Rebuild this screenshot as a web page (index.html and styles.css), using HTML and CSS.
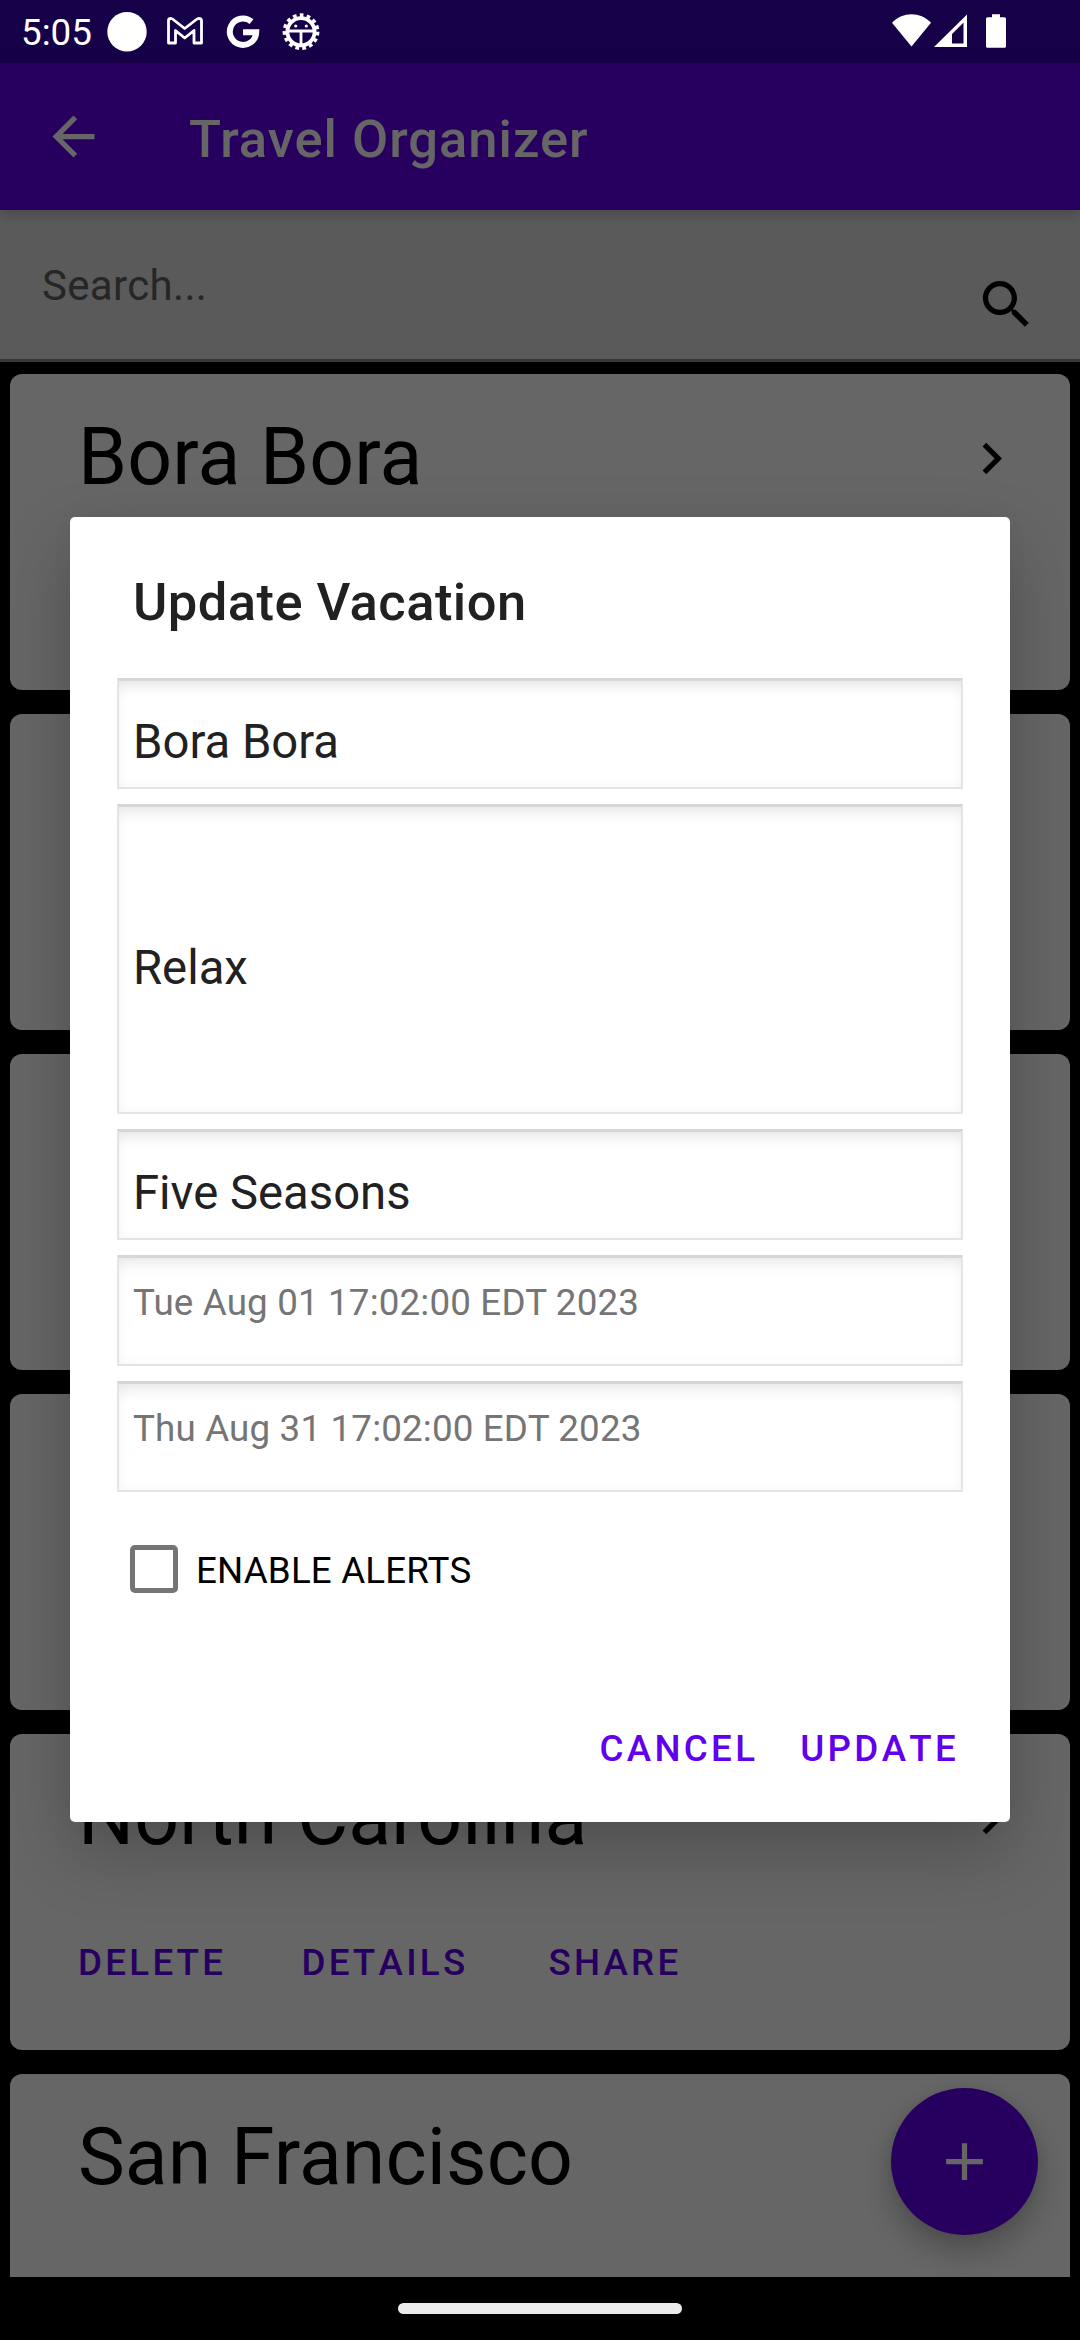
FILE: index.html
```html
<!DOCTYPE html>
<html lang="en">
<head>
<meta charset="utf-8">
<title>Travel Organizer</title>
<link rel="stylesheet" href="styles.css">
</head>
<body>
<div class="screen">
  <div class="app">
    <div class="status-space"></div>
    <header class="app-bar">
      <svg class="icon" viewBox="0 0 24 24"><path d="M20 11H7.83l5.59-5.59L12 4l-8 8 8 8 1.41-1.41L7.83 13H20v-2z"/></svg>
      <h1 class="app-title">Travel Organizer</h1>
    </header>
    <div class="search">
      <span class="search-hint">Search...</span>
      <svg class="icon search-icon" viewBox="0 0 24 24"><path d="M15.5 14h-.79l-.28-.27C15.41 12.59 16 11.11 16 9.5 16 5.91 13.09 3 9.5 3S3 5.91 3 9.5 5.91 16 9.5 16c1.61 0 3.09-.59 4.23-1.57l.27.28v.79l5 4.99L20.49 19l-4.99-5zm-6 0C7.01 14 5 11.99 5 9.5S7.01 5 9.5 5 14 7.01 14 9.5 11.99 14 9.5 14z"/></svg>
    </div>
    <main class="list">
      <article class="card">
        <div class="card-head"><h2 class="card-title">Bora Bora</h2><svg class="icon" viewBox="0 0 24 24"><path d="M10 6L8.59 7.41 13.17 12l-4.58 4.59L10 18l6-6z"/></svg></div>
      </article>
      <article class="card"></article>
      <article class="card"></article>
      <article class="card"></article>
      <article class="card">
        <div class="card-head"><h2 class="card-title">North Carolina</h2><svg class="icon" viewBox="0 0 24 24"><path d="M10 6L8.59 7.41 13.17 12l-4.58 4.59L10 18l6-6z"/></svg></div>
        <div class="card-actions"><span>DELETE</span><span>DETAILS</span><span>SHARE</span></div>
      </article>
      <article class="card">
        <div class="card-head"><h2 class="card-title">San Francisco</h2></div>
      </article>
    </main>
    <div class="fab"><svg class="icon" viewBox="0 0 24 24"><path d="M19 13h-6v6h-2v-6H5v-2h6V5h2v6h6v2z"/></svg></div>
  </div>

  <div class="scrim">
    <section class="dialog">
      <h2 class="dialog-title">Update Vacation</h2>
      <div class="fields">
        <div class="field">Bora Bora</div>
        <div class="field field-tall">Relax</div>
        <div class="field">Five Seasons</div>
        <div class="field field-date">Tue Aug 01 17:02:00 EDT 2023</div>
        <div class="field field-date">Thu Aug 31 17:02:00 EDT 2023</div>
      </div>
      <div class="alerts"><span class="checkbox"></span><span class="alerts-label">ENABLE ALERTS</span></div>
      <div class="dialog-actions"><span>CANCEL</span><span>UPDATE</span></div>
    </section>
  </div>

  <div class="status-bar">
    <span class="clock">5:05</span>
    <svg class="status-left" viewBox="0 0 220 63" width="220" height="63">
      <circle cx="27" cy="31.7" r="19.7" fill="#fff"/>
      <path d="M68.5 20.5Q68.5 18.5 71 18.5L72.5 19L84.7 28.500L97 19L98.500 18.500Q101.500 18.500 101.500 20.500V43H94V30.500L84.700 38L75.500 30.500V43H68.500Z" fill="none" stroke="#fff" stroke-width="2.8" stroke-linejoin="round"/>
      <path d="M151.500 21.600A13.200 13.200 0 1 0 156.200 32.300H143" fill="none" stroke="#fff" stroke-width="6"/>
      <g fill="none" stroke="#fff">
        <circle cx="201" cy="31.7" r="13.6" stroke-width="3.8"/>
        <circle cx="201" cy="31.7" r="16.5" stroke-width="3.8" stroke-dasharray="3.7 3.212"/>
        <path d="M188 31H214M201 31V46" stroke-width="2.8"/>
      </g>
      <circle cx="195.7" cy="26" r="1.6" fill="#fff"/><circle cx="206.3" cy="26" r="1.6" fill="#fff"/>
    </svg>
    <svg class="status-right" viewBox="0 0 116 63" width="116" height="63">
      <path d="M0 22.700C11 11.500 28 11.500 39 22.700L19.500 46.500Z" fill="#fff"/>
      <path d="M42 47L75 14.500V47ZM60 43.500H71.500V22.500L60 34Z" fill="#fff" fill-rule="evenodd"/>
      <path d="M100 14.300h8v3h4.500q1.500 0 1.500 1.500v27.500q0 1.500-1.500 1.500h-17q-1.500 0-1.500-1.500v-27.500q0-1.500 1.500-1.500h4.500z" fill="#fff"/>
    </svg>
  </div>
  <div class="nav-bar"><div class="nav-pill"></div></div>
</div>
</body>
</html>
```
FILE: styles.css
```css
* { box-sizing: border-box; }
body { margin: 0; background: #000; font-family: Roboto, sans-serif; }
h1, h2 { margin: 0; font-weight: 400; }
.screen { position: relative; width: 1080px; height: 2340px; overflow: hidden; background: #000; }
.icon { width: 63px; height: 63px; flex: none; fill: currentColor; display: block; }

.app { position: relative; z-index: 0; height: 2277px; overflow: hidden; display: flex; flex-direction: column; }
.status-space { height: 63px; flex: none; background: #3700b3; }
.app-bar { position: relative; z-index: 1; height: 147px; flex: none; display: flex; align-items: center; gap: 84px; padding: 0 42px; background: #6200ee; color: #fff; box-shadow: 0 4px 12px rgba(0, 0, 0, .22); }
.app-title { font-size: 52.5px; font-weight: 500; line-height: 62px; padding-top: 4px; letter-spacing: 1px; }
.search { height: 152px; flex: none; display: flex; justify-content: space-between; padding: 0 42px; background: #e1e1e1; border-bottom: 3px solid #8c8c8c; }
.search-hint { font-size: 42px; line-height: 50px; padding-top: 51px; letter-spacing: .33px; color: #606060; }
.search-icon { margin-top: 63px; }
.list { display: flex; flex-direction: column; gap: 24px; padding: 12px 10px; }
.card { height: 316px; flex: none; border-radius: 12px; background: #fff; padding: 37px 47px 0 68px; color: #000; }
.card-head { display: flex; justify-content: space-between; align-items: flex-start; height: 150px; }
.card-title { font-size: 78.75px; line-height: 92px; letter-spacing: .1px; }
.card-head .icon { margin-top: 16px; }
.card-actions { display: grid; grid-template-columns: 223.5px 247px auto; font-size: 36.75px; font-weight: 500; letter-spacing: 3.28px; font-kerning: none; line-height: 44px; padding-top: 20px; color: #6200ee; }
.fab { position: absolute; left: 891px; top: 2088px; width: 147px; height: 147px; border-radius: 50%; background: #6200ee; color: #fff; display: grid; place-items: center; box-shadow: 0 16px 32px rgba(0, 0, 0, .26), 0 0 12px rgba(0, 0, 0, .08); }

.scrim { position: absolute; inset: 0; background: rgba(0, 0, 0, .6); padding: 517px 70px 0; }
.dialog { height: 1305px; border-radius: 5px; background: #fff; padding: 54px 47px 0; color: #212121; box-shadow: 0 30px 70px rgba(0, 0, 0, .22), 0 0 24px rgba(0, 0, 0, .03); display: flex; flex-direction: column; }
.dialog-title { font-size: 52.5px; font-weight: 500; line-height: 62px; padding-left: 16px; letter-spacing: .44px; }
.fields { display: flex; flex-direction: column; gap: 15px; margin-top: 45px; }
.field { height: 111px; display: flex; align-items: center; padding: 16px 14px 0; font-size: 47.25px; line-height: 56px; border: 2px solid #e4e4e4; border-top: 3px solid #d6d6d6; box-shadow: inset 0 14px 14px -7px rgba(0, 0, 0, .07), inset 0 0 12px rgba(0, 0, 0, .04); }
.field-tall { height: 310px; }
.field-date { align-items: flex-start; padding-top: 23px; font-size: 36.75px; line-height: 44px; letter-spacing: .16px; color: #757575; }
.alerts { display: flex; align-items: center; gap: 18px; margin: 53px 0 0 13px; font-size: 36.75px; line-height: 48px; letter-spacing: .15px; color: #000; }
.alerts-label { padding-top: 2px; margin-bottom: -2px; }
.checkbox { width: 48px; height: 48px; border: 5px solid #757575; border-radius: 5px; }
.dialog-actions { display: flex; justify-content: flex-end; gap: 42px; margin-top: 134px; padding-right: 4px; font-size: 36.75px; font-weight: 500; line-height: 44px; letter-spacing: 3.28px; font-kerning: none; color: #6200ee; }

.status-bar { position: absolute; inset: 0 0 auto; height: 63px; display: flex; padding: 0 72px 0 21px; color: #fff; }
.clock { font-size: 36.75px; line-height: 44px; padding-top: 11px; width: 79px; }
.status-right { margin-left: auto; }
.nav-bar { position: absolute; inset: auto 0 0; height: 63px; display: grid; place-items: center; background: #000; }
.nav-pill { width: 284px; height: 11px; border-radius: 6px; background: #ebebeb; }
```
